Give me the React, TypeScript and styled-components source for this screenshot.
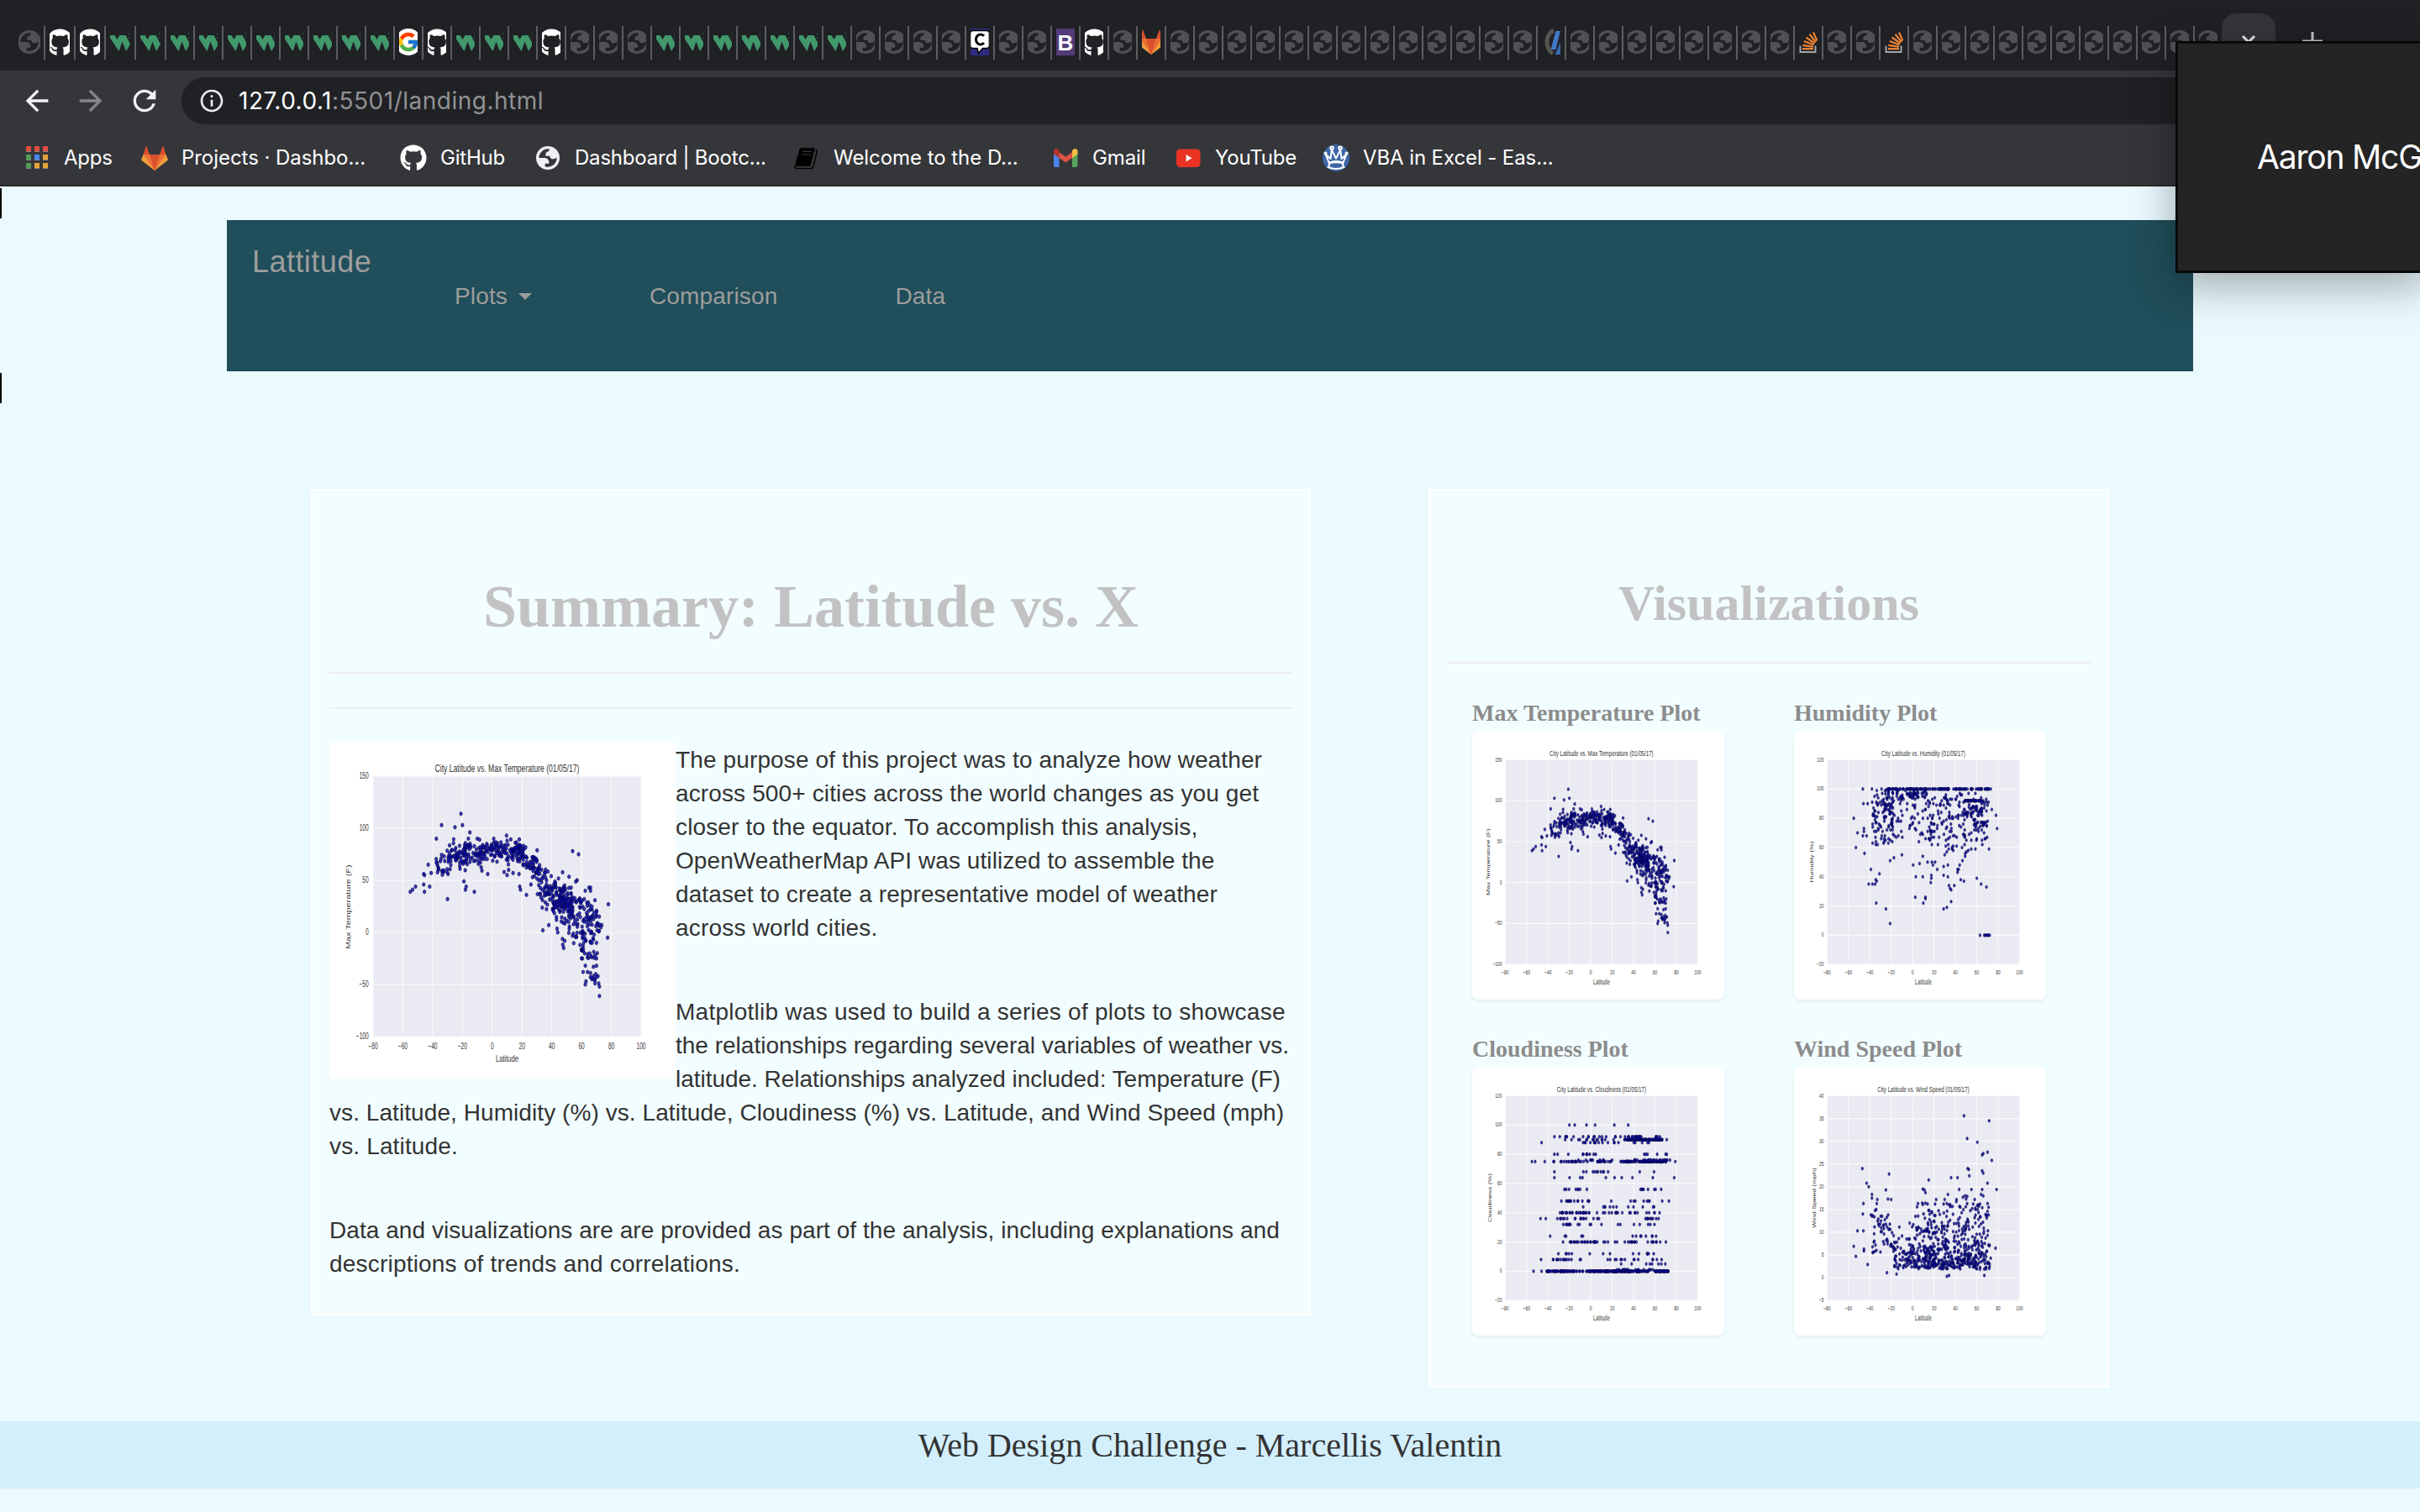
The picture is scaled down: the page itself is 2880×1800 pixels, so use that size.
import React from "react";
import styled, { createGlobalStyle } from "styled-components";
import { MdArrowBack, MdArrowForward, MdInfoOutline, MdRefresh } from "react-icons/md";
import { FcGoogle } from "react-icons/fc";
import { FaGithub } from "react-icons/fa";

const sans = `"Liberation Sans", Arial, sans-serif`;
const serif = `"Liberation Serif", "Times New Roman", serif`;
const chromeFont = `Inter, Roboto, sans-serif`;

const GlobalStyle = createGlobalStyle`
  * { box-sizing: border-box; }
  html, body { margin: 0; padding: 0; }
  body { background: #eafaff; overflow: hidden; }
`;

const Screen = styled.div`
  position: relative;
  width: 2880px;
  height: 1800px;
  overflow: hidden;
  display: flex;
  flex-direction: column;
  background: #eafaff;
`;

/* ---------- browser chrome ---------- */

const TabStrip = styled.div`
  height: 84px;
  flex: none;
  background: #202124;
  display: flex;
  align-items: flex-start;
`;

const Tab = styled.div<{ $w: number; $first?: boolean }>`
  width: ${(p) => p.$w}px;
  height: 40px;
  margin-top: 31px;
  flex: none;
  display: flex;
  align-items: center;
  justify-content: ${(p) => (p.$first ? "flex-end" : "center")};
  padding-right: ${(p) => (p.$first ? 4 : 0)}px;
  border-left: ${(p) => (p.$first ? "none" : "2px solid #5c5e62")};
`;

const IconClip = styled.div<{ $clip: number }>`
  width: ${(p) => p.$clip}px;
  height: 32px;
  margin-bottom: 2px;
  overflow: hidden;
  display: flex;
  justify-content: center;
  svg { flex: none; display: block; }
`;

const ActiveTab = styled.div`
  width: 64px;
  height: 68px;
  margin: 16px 0 0;
  background: #35363a;
  border-radius: 18px 18px 0 0;
  display: flex;
  justify-content: center;
  padding-top: 24px;
`;

const NewTab = styled.div`
  width: 26px;
  margin: 37px 0 0 31px;
`;

const Toolbar = styled.div`
  height: 72px;
  flex: none;
  background: #35363a;
  display: flex;
  align-items: center;
  padding-left: 24px;
`;

const NavButton = styled.div<{ $dim?: boolean }>`
  width: 64px;
  flex: none;
  color: ${(p) => (p.$dim ? "#85868a" : "#f1f3f4")};
  svg { display: block; }
`;

const AddressBar = styled.div`
  flex: 1;
  height: 56px;
  background: #202124;
  border-radius: 28px 0 0 28px;
  display: flex;
  align-items: center;
  padding-left: 20px;
  color: #ececee;
`;

const Url = styled.div`
  margin-left: 16px;
  font: 400 28px ${chromeFont};
  letter-spacing: 0.5px;
  color: #919295;
  white-space: nowrap;
  b { font-weight: 400; color: #fff; }
`;

const Bookmarks = styled.div`
  height: 66px;
  flex: none;
  background: #35363a;
  border-bottom: 2px solid #29282a;
  display: flex;
  align-items: flex-start;
  padding-left: 28px;
`;

const Bookmark = styled.div<{ $w: number; $ls: number }>`
  width: ${(p) => p.$w}px;
  height: 64px;
  flex: none;
  display: flex;
  align-items: center;
  gap: 16px;
  font: 400 24px ${chromeFont};
  letter-spacing: ${(p) => p.$ls}px;
  color: #fff;
  white-space: nowrap;
  svg { flex: none; display: block; }
  span { padding-bottom: 2px; }
`;

/* ---------- page ---------- */

const Page = styled.main`
  flex: 1;
  display: flex;
  flex-direction: column;
  padding-top: 40px;
`;

const Navbar = styled.nav`
  width: 2340px;
  height: 180px;
  margin: 0 auto;
  background: #204e5a;
  border-bottom: 2px solid #1c4854;
  display: flex;
  padding-left: 30px;
  font-family: ${sans};
  color: #9d9d9d;
`;

const Brand = styled.div`
  width: 241px;
  padding-top: 30px;
  font-size: 36px;
  line-height: 40px;
  letter-spacing: 0.45px;
`;

const NavLink = styled.div<{ $gap: number }>`
  display: flex;
  align-items: center;
  height: 40px;
  margin-top: 71px;
  margin-right: ${(p) => p.$gap}px;
  font-size: 28px;
  letter-spacing: 0.15px;
`;

const Caret = styled.span`
  margin-left: 13px;
  border-top: 8px solid #9d9d9d;
  border-left: 8px solid transparent;
  border-right: 8px solid transparent;
`;

const Columns = styled.div`
  display: flex;
  align-items: flex-start;
  gap: 140px;
  margin: 140px 0 0 370px;
`;

const Card = styled.section<{ $w: number; $h: number; $pt: number }>`
  width: ${(p) => p.$w}px;
  height: ${(p) => p.$h}px;
  border: 2px solid #fff;
  background: #f2fdff;
  padding: ${(p) => p.$pt}px 20px 20px;
`;

const Heading = styled.h1<{ $size: number; $mb: number }>`
  margin: 0 0 ${(p) => p.$mb}px;
  font: 700 ${(p) => p.$size}px/80px ${serif};
  color: #c2c2c2;
  text-align: center;
`;

const Rule = styled.hr<{ $mb: number }>`
  margin: 0 0 ${(p) => p.$mb}px;
  border: 0;
  height: 2px;
  background: #eeeeee;
`;

const Copy = styled.div`
  font: 400 28px/40px ${sans};
  color: #333;
  white-space: nowrap;
`;

const Paragraph = styled.p`
  margin: 0 0 60px;
`;

const Line = styled.span<{ $ls: number }>`
  letter-spacing: ${(p) => p.$ls}px;
  line-height: 20px;
  vertical-align: -1px;
`;

const FloatFigure = styled.div`
  float: left;
  width: 412px;
  height: 400px;
  background: #fff;
  svg { display: block; }
`;

const PlotGrid = styled.div`
  display: grid;
  grid-template-columns: 383px 383px;
  grid-auto-rows: 400px;
  padding-left: 30px;
`;

const PlotTitle = styled.div`
  height: 40px;
  font: 700 28px/38px ${serif};
  color: #8c8c8c;
`;

const Thumb = styled.div`
  width: 300px;
  height: 320px;
  background: #fff;
  border-radius: 8px;
  box-shadow: 0 2px 4px rgba(0, 40, 60, 0.08);
  svg { display: block; }
`;

const Footer = styled.footer`
  margin-top: 40px;
  height: 80px;
  background: #d3effc;
  font: 400 40px/58px ${serif};
  color: #333;
  text-align: center;
`;

const TextMark = styled.span<{ $top: number }>`
  position: absolute;
  left: 0;
  top: ${(p) => p.$top}px;
  width: 2px;
  height: 36px;
  background: #0a0a0a;
`;

const CallWindow = styled.aside`
  position: absolute;
  left: 2589px;
  top: 49px;
  width: 300px;
  height: 276px;
  border: 2px solid #070707;
  background: #242424;
  box-shadow: inset 0 0 0 1px #101010, 0 14px 50px rgba(0, 0, 0, 0.34);
  display: flex;
  align-items: center;
  padding: 0 0 2px 95px;
  font: 400 39px ${chromeFont};
  letter-spacing: -1.2px;
  color: #fff;
  white-space: nowrap;
`;

/* ---------- icons ---------- */

const GLOBE =
  "M12 1.5a10.5 10.5 0 1 1 0 21 10.5 10.5 0 0 1 0-21ZM4 12h4.4c3.407.022 4.922 1.73 4.543 5.127H9.488v2.47a8.004 8.004 0 0 0 10.498-8.083C19.327 12.504 18.332 13 17 13c-2.137 0-3.206-.916-3.206-2.75h-3.748c-.274-2.728.683-4.092 2.87-4.092 0-.975.327-1.597.811-1.97A8.004 8.004 0 0 0 4 12Z";

const Globe = ({ color = "#505155" }: { color?: string }) => (
  <svg width="32" height="32" viewBox="0 0 24 24">
    <path d={GLOBE} fill={color} fillRule="evenodd" />
  </svg>
);

const Wave = () => (
  <svg width="32" height="32" viewBox="0 0 32 32">
    <path d="M4 8H9.500L12.500 13L15.500 8H22.500L28 18.500L23 27L18.500 15.500L14.500 27L4 11Z" fill="#41986b" />
    <path d="M26.500 5V15" stroke="#285a44" strokeWidth="1" strokeDasharray="2 3" />
  </svg>
);

const Google = () => (
  <svg width="32" height="32" viewBox="0 0 32 32">
    <circle cx="16" cy="16" r="16" fill="#fff" />
    <FcGoogle x={2.5} y={2.5} size={27} />
  </svg>
);

const Chat = () => (
  <svg width="32" height="32" viewBox="0 0 32 32">
    <rect width="32" height="32" fill="#2d2b7f" />
    <path
      d="M8 2.500H24Q27.500 2.500 27.500 6V20Q27.500 23.500 24 23.500H19.500L14.500 29.500L13 23.500H8Q4.500 23.500 4.500 20V6Q4.500 2.500 8 2.500Z"
      fill="#fff"
      stroke="#050505"
      strokeWidth="1.600"
    />
    <path d="M21 8.800A5.500 6 0 1 0 21 17" fill="none" stroke="#050505" strokeWidth="3" />
  </svg>
);

const Boot = () => (
  <svg width="32" height="32" viewBox="0 0 32 32">
    <rect width="32" height="32" fill="#543b79" />
    <text x="16" y="25.500" textAnchor="middle" fontFamily="Liberation Sans, sans-serif" fontWeight="700" fontSize="26" fill="#fff">
      B
    </text>
  </svg>
);

const GitLab = () => (
  <svg width="32" height="32" viewBox="0 0 32 32">
    <path d="M16 31L0 18.500L2.500 12H29.500L32 18.500Z" fill="#f0a03c" />
    <path d="M16 31L2.500 12H29.500Z" fill="#ea7236" />
    <path d="M16 31L10 12H22Z" fill="#da4f2c" />
    <path d="M2.500 12L6 1L10 12ZM29.500 12L26 1L22 12Z" fill="#da4f2c" />
  </svg>
);

const Slash = () => (
  <svg width="32" height="32" viewBox="0 0 32 32">
    <path d="M19 2.500A10 14 0 0 0 18 29.500" fill="none" stroke="#55564f" strokeWidth="5" />
    <path d="M15.500 25L21.500 3H27L21.500 25Z" fill="#4178c6" />
    <path d="M20.500 31L27 16V31Z" fill="#3769b0" />
  </svg>
);

const Stack = () => (
  <svg width="32" height="32" viewBox="0 0 32 32">
    <path d="M6.500 20.500V28H24.500V20.500" fill="none" stroke="#a0a4a8" strokeWidth="2" />
    <path
      d="M9 24.200H22M9.300 19.800L22 21.600M10.800 15L22.500 19.200M13.500 10.500L23.500 17.500M17.500 6.800L25 16M22 4.500L26.500 14.500"
      stroke="#ea8235"
      strokeWidth="2.200"
      fill="none"
    />
  </svg>
);

const AppsGrid = () => (
  <svg width="32" height="32" viewBox="0 0 32 32">
    {["#e04b3f", "#e04b3f", "#e04b3f", "#4f9d58", "#4a86ee", "#e5a435", "#4f9d58", "#e5a435", "#e5a435"].map((c, i) => (
      <g key={i}>
        <rect x={3 + (i % 3) * 10} y={2 + Math.floor(i / 3) * 10} width="6" height="7" fill="#87898c" />
        <rect x={3 + (i % 3) * 10} y={2 + Math.floor(i / 3) * 10} width="6" height="6" fill={c} />
      </g>
    ))}
  </svg>
);

const Book = () => (
  <svg width="32" height="32" viewBox="0 0 32 32">
    <path d="M8 4H24.500Q26 4 25.500 6L21 24Q20.500 26 19 26H5Q2 26 2.500 23Z" fill="#000" />
    <path d="M27 6Q28.500 7 28 9L24 26Q23.500 28.500 21 28.500H4Q1.500 28.500 2 25" fill="none" stroke="#050505" strokeWidth="1.600" />
    <path d="M11 8.500H22M10 12H21" stroke="#3c3c3e" strokeWidth="1.200" />
    <path d="M4 26.800H21.500L26 9" stroke="#3c3c3e" strokeWidth="0.900" fill="none" />
  </svg>
);

const Gmail = () => (
  <svg width="32" height="32" viewBox="0 0 32 32">
    <path d="M2 8V24.500Q2 27 4.500 27H8.500V13Z" fill="#4f83ee" />
    <path d="M30.500 8V24.500Q30.500 27 28 27H24V13Z" fill="#57a55b" />
    <path d="M8.500 9L16.200 14.800L24 9V16L16.200 21.500L8.500 16Z" fill="#de5145" />
    <path d="M2 8.500Q2 5 5 5Q6.500 5 8.500 7V16L2 11.500Z" fill="#b3342c" />
    <path d="M30.500 8.500Q30.500 5 27.500 5Q26 5 24 7V16L30.500 11.500Z" fill="#f2bf42" />
  </svg>
);

const YouTube = () => (
  <svg width="32" height="32" viewBox="0 0 32 32">
    <rect x="2" y="5.500" width="28.500" height="21.500" rx="4.500" fill="#ea3323" />
    <path d="M13.500 12V20.500L20.500 16.250Z" fill="#fff" />
  </svg>
);

const Crown = () => (
  <svg width="32" height="32" viewBox="0 0 32 32">
    <circle cx="16" cy="16" r="16" fill="#3d66a8" />
    <g stroke="#fff" strokeWidth="2" fill="none" strokeLinejoin="round">
      <path d="M7.500 21.500L3.500 11.500L9.500 17L10.800 6.500L16 16.500L21.200 6.500L22.500 17L28.500 11.500L24.500 21.500Q16 18.500 7.500 21.500Z" />
      <path d="M7.500 22.500Q16 20 24.500 22.500Q23 24.500 25.500 27Q16 31 6.500 27Q9 24.500 7.500 22.500Z" />
      <circle cx="11" cy="4.200" r="1.800" />
      <circle cx="21" cy="4.200" r="1.800" />
      <circle cx="3.500" cy="10.500" r="1" />
      <circle cx="28.500" cy="10.500" r="1" />
    </g>
  </svg>
);

const Octocat = () => <FaGithub size={33} color="#fff" />;

type Kind = "globe" | "git" | "wave" | "google" | "chat" | "boot" | "lab" | "slash" | "stack";
const favicon: Record<Kind, () => React.ReactElement> = {
  globe: () => <Globe />,
  git: Octocat,
  wave: Wave,
  google: Google,
  chat: Chat,
  boot: Boot,
  lab: GitLab,
  slash: Slash,
  stack: Stack,
};

const rep = (k: Kind, n: number): Kind[] => Array.from({ length: n }, () => k);
const tabs: Kind[] = [
  "globe", "git", "git", ...rep("wave", 2), ...rep("wave", 8), "google", "git", ...rep("wave", 3), "git",
  ...rep("globe", 3), ...rep("wave", 7), ...rep("globe", 4), "chat", ...rep("globe", 2), "boot", "git", "globe",
  "lab", ...rep("globe", 13), "slash", ...rep("globe", 8), "stack", ...rep("globe", 2), "stack", ...rep("globe", 11),
];

const bookmarks = [
  { label: "Apps", w: 140, ls: -0.25, icon: <AppsGrid /> },
  { label: "Projects · Dashbo...", w: 308, ls: -0.05, icon: <GitLab /> },
  { label: "GitHub", w: 160, ls: -0.2, icon: <FaGithub size={32} color="#fff" /> },
  { label: "Dashboard | Bootc...", w: 308, ls: -0.2, icon: <Globe color="#eff0f2" /> },
  { label: "Welcome to the D...", w: 308, ls: -0.05, icon: <Book /> },
  { label: "Gmail", w: 146, ls: -0.1, icon: <Gmail /> },
  { label: "YouTube", w: 176, ls: -0.2, icon: <YouTube /> },
  { label: "VBA in Excel - Eas...", w: 300, ls: -0.1, icon: <Crown /> },
];

/* ---------- scatter data ---------- */

type Pt = [number, number];

function makeRandom(seed: number) {
  let s = seed;
  return () => {
    s = (s * 1664525 + 1013904223) % 4294967296;
    return s / 4294967296;
  };
}

function latitude(r: () => number) {
  const k = r();
  if (k < 0.13) return -38 + r() * 20;
  if (k < 0.4) return -20 + r() * 40;
  if (k < 0.5) return 14 + r() * 14;
  if (k < 0.76) return 27 + r() * 22;
  return 48 + Math.pow(r(), 1.1) * 24;
}

const bell = (r: () => number) => (r() + r() + r() + r() - 2) * 0.87;

const curve: Pt[] = [
  [-55, 40], [-46, 54], [-38, 63], [-30, 71], [-22, 77], [-10, 77], [0, 78], [12, 79], [19, 78], [24, 70],
  [29, 62], [34, 47], [40, 36], [46, 27], [52, 21], [57, 14], [62, 8], [66, 4], [69, 3], [73, 4],
];

function curveAt(x: number) {
  for (let i = 1; i < curve.length; i++) {
    if (x <= curve[i][0]) {
      const [x0, y0] = curve[i - 1];
      const [x1, y1] = curve[i];
      return y0 + ((y1 - y0) * (x - x0)) / (x1 - x0);
    }
  }
  return 4;
}

function temperature(): Pt[] {
  const r = makeRandom(11);
  const pts: Pt[] = [
    [-21, 114], [-34, 103], [-25, 101], [-20, 103], [-15, 96], [-37.500, 90], [-16, 90], [54, 78], [58, 75], [57, 50],
    [-30, 32], [-12, 39], [-18, 41], [-17.500, 44], [-19, 49], [-55, 39], [-53.500, 41], [-51.500, 44], [-46, 46],
    [-45.500, 39], [-42, 44], [-46, 56], [-45.500, 55], [-43, 65], [-41, 57], [-3, 56], [78, 27], [77.500, -5],
    [73.500, 7], [73, 5], [72, -61], [72, -52], [71.500, -49], [71, -42], [48, -15], [34, 2], [38, 7], [44, 0],
    [19, 41], [18.500, 44], [23, 36], [26, 46], [18, 56], [10, 55], [11, 60], [8, 58], [14, 57], [65, 43], [66, 40],
    [66, 43], [62.500, 40], [53, 43], [63, -47], [62.500, -50], [61, -38], [64, -38], [66, -39], [66, -43],
    [67, -45], [68, -42], [69, -46], [69, -49], [69.500, -40], [70, -43], [68, -33], [70, -32], [70, -25],
    [70.500, -20], [69, -22], [64, -24], [62, -20], [60.500, -25], [64, -21], [60, -17], [67, -44], [68.500, -45],
    [-10, 90], [1, 90], [-8.500, 89], [10, 88], [60, -25], [70, -10], [67, -10], [63, -8], [61, -13],
  ];
  for (let i = 0; i < 560; i++) {
    const x = latitude(r);
    const spread = x < -15 ? 12 : x < 20 ? 9 : x < 30 ? 12 : x < 45 ? 23 : 29;
    let y = curveAt(x) + bell(r) * spread;
    if (x > -34 && x < -5 && r() < 0.25) y -= 8;
    pts.push([x, y]);
  }
  for (let i = 0; i < 40; i++) pts.push([45 + r() * 14, 29 + bell(r) * 7]);
  return pts;
}

function humidity(): Pt[] {
  const r = makeRandom(29);
  const pts: Pt[] = [
    [-46.500, 100], [-38, 100], [-33.500, 99], [-29, 100], [-46, 90], [-42, 90], [-55, 80], [-51.500, 70], [-53, 60],
    [-45.500, 73], [-45.500, 71], [-46.500, 68], [-43, 68], [-45, 56], [-39, 45], [-31, 42], [-41, 35], [-37.500, 35],
    [-35, 35], [-34.500, 38], [-33.500, 37], [-34, 22], [-25, 18], [-21, 8], [-21, 51], [-17.500, 53], [-10, 55],
    [0.500, 48], [6.500, 49], [3, 40], [9.500, 40], [9.500, 54], [14, 50], [18, 50], [19, 48], [21, 50], [23, 45],
    [17.500, 41], [17.500, 39], [17, 36], [2.500, 26], [12, 26], [12, 25], [10, 22], [29, 18], [32, 19], [36, 23],
    [35, 32], [36, 31], [39, 34], [33, 40], [29, 41], [29, 47], [45, 38], [48, 37], [60, 39], [64, 35], [69, 33],
    [63, 0], [67, 0], [68, 0], [69, 0], [70, 0], [71, 0], [72, 0], [78, 82], [79, 73], [74, 86], [73, 100],
    [42, 43], [42, 45], [43, 45], [44, 48], [33, 48], [34, 34],
  ];
  for (let i = 0; i < 78; i++) pts.push([-24 + r() * 60, 100]);
  for (let i = 0; i < 40; i++) pts.push([38 + r() * 34, 100]);
  for (let i = 0; i < 55; i++) pts.push([-26 + r() * 40, 93 + r() * 6.500]);
  for (let i = 0; i < 62; i++) pts.push([49 + r() * 17, i % 2 ? 92 : 85 + bell(r) * 4]);
  for (let i = 0; i < 18; i++) pts.push([57 + r() * 13, 76 + bell(r) * 2]);
  for (let i = 0; i < 60; i++) pts.push([-38 + r() * 21, 62 + Math.round(r() * 34)]);
  for (let i = 0; i < 285; i++) {
    const x = latitude(r);
    const low = x < 5 ? 66 : x < 28 ? 60 : x < 50 ? 51 : 57;
    pts.push([x, low + Math.round(Math.pow(r(), 0.8) * (97 - low))]);
  }
  return pts;
}

function cloudiness(): Pt[] {
  const r = makeRandom(47);
  const pts: Pt[] = [
    [-20, 100], [-15, 100], [-4, 100], [4, 100], [22, 100], [35, 100], [-46, 88], [-55, 75], [-52, 75], [-43, 75],
    [79, 75], [78, 64], [74, 76], [73, 48], [-53.500, 0], [-46, 0], [-46.500, 8], [-47, 36], [-42, 36], [-38, 24],
    [-34, 92], [-29, 92], [-34, 80], [-31, 80], [-21, 80], [50, 80], [51.500, 80], [53, 80], [62, 80], [70, 80], [71, 80],
    [-34, 68], [-34, 64], [71, 90],
  ];
  const bands: [number, number, number, number][] = [
    [90, 14, -24, 25], [92, 15, -24, 28], [90, 80, 31, 67], [92, 18, 30, 67], [88, 18, -8, 60], [80, 8, -15, 5],
    [75, 35, -36, 30], [75, 80, 30, 71], [76, 10, -12, 20], [76, 22, 40, 72], [68, 10, -10, 22], [68, 2, 42, 62],
    [64, 8, -20, 63], [56, 8, -26, 10], [56, 8, 34, 70], [48, 14, -28, 0], [48, 9, 15, 72], [44, 12, -8, 72],
    [40, 26, -30, 0], [40, 16, 5, 46], [40, 5, 52, 66], [36, 17, -35, 8], [36, 9, 45, 68], [32, 12, -32, 14],
    [32, 7, 25, 65], [24, 4, -25, -3], [24, 8, 38, 62], [20, 16, -26, 0], [20, 22, 0, 43], [20, 8, 52, 71],
    [12, 10, -32, 50], [12, 5, 50, 63], [8, 14, -36, -9], [8, 14, 5, 72], [5, 8, 16, 70], [0, 46, -42, -18],
    [0, 14, -18, -2], [0, 90, -2, 30], [0, 62, 28, 54], [1, 16, 20, 60], [0, 40, 60, 73],
  ];
  bands.forEach(([v, n, a, b]) => {
    for (let i = 0; i < n; i++) pts.push([a + r() * (b - a), v]);
  });
  return pts;
}

function windSpeed(): Pt[] {
  const r = makeRandom(83);
  const pts: Pt[] = [
    [48, 35.600], [71.500, 34.500], [51, 30.600], [60.500, 29.800], [70, 27.600], [65, 27], [66, 27.300], [74, 25.800],
    [51.500, 24], [52.500, 23.800], [65, 23.500], [66, 23], [53, 22.400], [36, 22], [42, 22], [15, 21.500], [70, 20.800],
    [-47, 24], [-22, 22.800], [-43, 20.800], [-41, 20], [-25, 19.300], [9.500, 19.500], [11, 19.300], [12, 18.700],
    [43.500, 19.400], [55, 19.400], [65, 19.400], [78.500, 19.400], [64, 18.300], [66, 18], [33, 18.300],
    [-38, 18.300], [-38, 17.500], [-33, 17.200], [-23, 17.300], [-20, 17.200], [-46, 16.300], [-46.500, 14],
    [-39, 13.800], [-33.500, 16.300], [-35, 14.800], [-34, 15], [-51.500, 10.300], [-46, 10.300], [-55, 6.900],
    [-53, 4.700], [-45.500, 6.300], [-45.500, 5.900], [-42, 2.900], [77.500, 6.500], [73, 4.300], [72, 3],
    [22, 17.200], [30, 17.200], [41, 17.200], [47, 17.700], [49, 18], [51, 17.900], [50, 17.300], [58, 17.200],
    [5, 16.300], [9, 16.400], [12, 16.400], [14, 16.200], [21, 16.200], [29, 16.200], [32, 16.300], [63, 16.200],
    [71, 15.500], [70, 14.600], [71, 13.800], [32, 0.300], [34, 0.500], [67, 0.500], [-15, 0.800], [-24, 1.100],
  ];
  for (let i = 0; i < 50; i++) pts.push([-38 + r() * 20, 5.500 + Math.pow(r(), 1.2) * 9]);
  for (let i = 0; i < 590; i++) {
    let x = latitude(r);
    if (x < -18) x += 30 + r() * 20;
    const top = x < 2 ? 9 : x < 28 ? 12.500 : 14;
    const heavy = Math.pow(r(), 2.1) * top;
    pts.push([x, 1.800 + heavy + Math.abs(bell(r)) * 2.400]);
  }
  return pts;
}

const temperaturePoints = temperature();

/* ---------- chart ---------- */

interface Frame {
  w: number; h: number; x0: number; x1: number; y0: number; y1: number;
  titleY: number; titleSize: number; squash: number;
  tickSize: number; tickSquash: number; tickRight: number; tickBase: number; xTickY: number;
  labelX: number; labelSize: number; labelMid: number; axisY: number; rx: number; ry: number;
}

const large: Frame = {
  w: 412, h: 400, x0: 52, x1: 371, y0: 40, y1: 350, titleY: 35.200, titleSize: 12.200, squash: 0.705,
  tickSize: 10, tickSquash: 0.66, tickRight: 46.700, tickBase: 2.800, xTickY: 364.600,
  labelX: 25, labelSize: 10.800, labelMid: 195.700, axisY: 380, rx: 2, ry: 2.500,
};

const small: Frame = {
  w: 300, h: 320, x0: 39.300, x1: 268.500, y0: 34.500, y1: 278.200, titleY: 29.500, titleSize: 9.600, squash: 0.645,
  tickSize: 8, tickSquash: 0.62, tickRight: 35.600, tickBase: 2, xTickY: 290,
  labelX: 20.500, labelSize: 8.600, labelMid: 156, axisY: 302.400, rx: 1.500, ry: 2.100,
};

interface ScatterProps {
  frame: Frame; name: string; axis: string; points: Pt[]; min: number; max: number; step: number; labelShift?: number;
}

const minus = (n: number) => String(n).replace("-", "−");

function Scatter({ frame: f, name, axis, points, min, max, step, labelShift = 0 }: ScatterProps) {
  const px = (x: number) => f.x0 + ((x + 80) / 180) * (f.x1 - f.x0);
  const py = (y: number) => f.y1 - ((y - min) / (max - min)) * (f.y1 - f.y0);
  const xs = Array.from({ length: 10 }, (_, i) => -80 + i * 20);
  const ys = Array.from({ length: Math.round((max - min) / step) + 1 }, (_, i) => min + i * step);
  const mid = (f.x0 + f.x1) / 2;
  const font = { fontFamily: "Liberation Sans, Arial, sans-serif", fill: "#333" };
  return (
    <svg width={f.w} height={f.h} viewBox={`0 0 ${f.w} ${f.h}`}>
      <rect x={f.x0} y={f.y0} width={f.x1 - f.x0} height={f.y1 - f.y0} fill="#eaeaf2" />
      {xs.map((x) => (
        <line key={x} x1={px(x)} x2={px(x)} y1={f.y0} y2={f.y1} stroke="#fafafc" strokeWidth="1" />
      ))}
      {ys.map((y) => (
        <line key={y} x1={f.x0} x2={f.x1} y1={py(y)} y2={py(y)} stroke="#fafafc" strokeWidth="1.200" />
      ))}
      {points.map(([x, y], i) => (
        <ellipse
          key={i} cx={px(x)} cy={py(y)} rx={f.rx - 0.300} ry={f.ry - 0.300}
          fill="#0a0ab4" fillOpacity="0.8" stroke="#05053c" strokeWidth="0.700" strokeOpacity="0.85"
        />
      ))}
      <text {...font} fontSize={f.titleSize} textAnchor="middle" transform={`translate(${mid} ${f.titleY}) scale(${f.squash} 1)`}>
        {`City Latitude vs. ${name} (01/05/17)`}
      </text>
      {xs.map((x) => (
        <text key={x} {...font} fontSize={f.tickSize} textAnchor="middle" transform={`translate(${px(x)} ${f.xTickY}) scale(${f.tickSquash} 1)`}>
          {minus(x)}
        </text>
      ))}
      {ys.map((y) => (
        <text key={y} {...font} fontSize={f.tickSize} textAnchor="end" transform={`translate(${f.tickRight} ${py(y) + f.tickBase}) scale(${f.tickSquash} 1)`}>
          {minus(y)}
        </text>
      ))}
      <text {...font} fontSize={f.labelSize} textAnchor="middle" transform={`translate(${mid} ${f.axisY}) scale(${f.squash} 1)`}>
        Latitude
      </text>
      <text {...font} fontSize={f.labelSize} textAnchor="middle" transform={`translate(${f.labelX + labelShift} ${f.labelMid}) rotate(-90) scale(1 ${f.squash})`}>
        {axis}
      </text>
    </svg>
  );
}

const plots = [
  { title: "Max Temperature Plot", name: "Max Temperature", axis: "Max Temperature (F)", points: temperaturePoints, min: -100, max: 150, step: 50, shift: 0 },
  { title: "Humidity Plot", name: "Humidity", axis: "Humidity (%)", points: humidity(), min: -20, max: 120, step: 20, shift: 2.500 },
  { title: "Cloudiness Plot", name: "Cloudiness", axis: "Cloudiness (%)", points: cloudiness(), min: -20, max: 120, step: 20, shift: 2.500 },
  { title: "Wind Speed Plot", name: "Wind Speed", axis: "Wind Speed (mph)", points: windSpeed(), min: -5, max: 40, step: 5, shift: 5 },
];

/* each line carries its own tracking */
const copy: [string, number][][] = [
  [
    ["The purpose of this project was to analyze how weather", 0.13],
    ["across 500+ cities across the world changes as you get", 0.13],
    ["closer to the equator. To accomplish this analysis,", 0.14],
    ["OpenWeatherMap API was utilized to assemble the", 0.08],
    ["dataset to create a representative model of weather", 0.1],
    ["across world cities.", 0.2],
  ],
  [
    ["Matplotlib was used to build a series of plots to showcase", 0.25],
    ["the relationships regarding several variables of weather vs.", 0],
    ["latitude. Relationships analyzed included: Temperature (F)", -0.03],
    ["vs. Latitude, Humidity (%) vs. Latitude, Cloudiness (%) vs. Latitude, and Wind Speed (mph)", 0.07],
    ["vs. Latitude.", 0.15],
  ],
  [
    ["Data and visualizations are are provided as part of the analysis, including explanations and", 0.06],
    ["descriptions of trends and correlations.", 0.2],
  ],
];

export default function App() {
  return (
    <Screen>
      <GlobalStyle />
      <TabStrip>
        {tabs.map((kind, i) => (
          <Tab key={i} $w={i === 0 ? 52 : i < 5 ? 36 : 34} $first={i === 0}>
            <IconClip $clip={i === 0 ? 26 : i < 5 ? 24 : 22}>{favicon[kind]()}</IconClip>
          </Tab>
        ))}
        <ActiveTab>
          <svg width="20" height="20" viewBox="0 0 20 20">
            <path d="M3 3L17 17M17 3L3 17" stroke="#e8eaed" strokeWidth="3" />
          </svg>
        </ActiveTab>
        <NewTab>
          <svg width="26" height="26" viewBox="0 0 26 26">
            <path d="M13 1V25M1 12H25" stroke="#c3c5c8" strokeWidth="3" />
          </svg>
        </NewTab>
      </TabStrip>
      <Toolbar>
        <NavButton><MdArrowBack size={40} /></NavButton>
        <NavButton $dim><MdArrowForward size={40} /></NavButton>
        <NavButton><MdRefresh size={40} /></NavButton>
        <AddressBar>
          <MdInfoOutline size={32} />
          <Url><b>127.0.0.1</b>:5501/landing.html</Url>
        </AddressBar>
      </Toolbar>
      <Bookmarks>
        {bookmarks.map((b) => (
          <Bookmark key={b.label} $w={b.w} $ls={b.ls}>
            {b.icon}
            <span>{b.label}</span>
          </Bookmark>
        ))}
      </Bookmarks>

      <Page>
        <Navbar>
          <Brand>Lattitude</Brand>
          <NavLink $gap={140}>Plots <Caret /></NavLink>
          <NavLink $gap={140}>Comparison</NavLink>
          <NavLink $gap={0}>Data</NavLink>
        </Navbar>
        <Columns>
          <Card $w={1190} $h={984} $pt={98}>
            <Heading $size={72} $mb={38}>Summary: Latitude vs. X</Heading>
            <Rule $mb={40} />
            <Rule $mb={40} />
            <Copy>
              <FloatFigure>
                <Scatter frame={large} name="Max Temperature" axis="Max Temperature (F)" points={temperaturePoints} min={-100} max={150} step={50} />
              </FloatFigure>
              {copy.map((lines, i) => (
                <Paragraph key={i}>
                  {lines.map(([text, tracking], j) => (
                    <React.Fragment key={j}>
                      {j > 0 && <br />}
                      <Line $ls={tracking}>{text}</Line>
                    </React.Fragment>
                  ))}
                </Paragraph>
              ))}
            </Copy>
          </Card>
          <Card $w={810} $h={1070} $pt={94}>
            <Heading $size={60} $mb={30}>Visualizations</Heading>
            <Rule $mb={40} />
            <PlotGrid>
              {plots.map((p) => (
                <div key={p.title}>
                  <PlotTitle>{p.title}</PlotTitle>
                  <Thumb>
                    <Scatter frame={small} name={p.name} axis={p.axis} points={p.points} min={p.min} max={p.max} step={p.step} labelShift={p.shift} />
                  </Thumb>
                </div>
              ))}
            </PlotGrid>
          </Card>
        </Columns>
        <Footer>Web Design Challenge - Marcellis Valentin</Footer>
      </Page>

      <TextMark $top={224} />
      <TextMark $top={444} />
      <CallWindow>Aaron McG</CallWindow>
    </Screen>
  );
}
